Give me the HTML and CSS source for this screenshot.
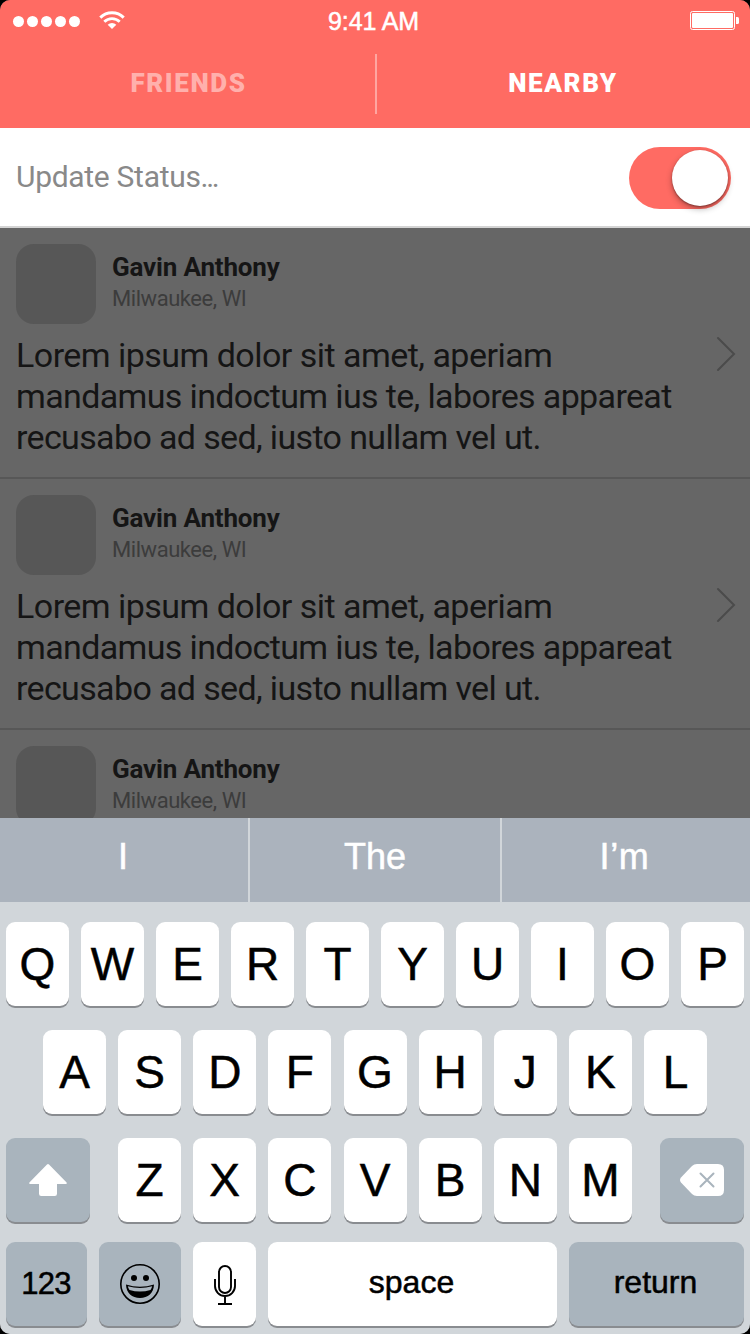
FILE: index.html
```html
<!DOCTYPE html>
<html lang="en">
<head>
<meta charset="utf-8">
<title>Nearby</title>
<link rel="stylesheet" href="styles.css">
</head>
<body>
<div class="screen">
  <header class="header">
    <div class="status-bar">
      <div class="signal">
        <span class="dot"></span><span class="dot"></span><span class="dot"></span><span class="dot"></span><span class="dot"></span>
        <svg class="wifi" width="26" height="18" viewBox="0 0 26 18">
          <path d="M1.3 6.6a16.6 16.6 0 0 1 23.4 0" fill="none" stroke="#fff" stroke-width="3"/>
          <path d="M5.3 10.8a11 11 0 0 1 15.4 0" fill="none" stroke="#fff" stroke-width="2.8"/>
          <path d="M13 18l-4.3-4.2a6.2 6.2 0 0 1 8.6 0z" fill="#fff"/>
        </svg>
      </div>
      <div class="clock">9:41 AM</div>
      <svg class="battery" width="49" height="19" viewBox="0 0 49 19">
        <rect x=".5" y=".5" width="44" height="18" rx="2" fill="none" stroke="#fff"/>
        <rect x="2" y="2" width="41" height="15" rx="1" fill="#fff"/>
        <path d="M46 6h1.500a1.500 1.500 0 0 1 1.500 1.500v4a1.500 1.500 0 0 1-1.500 1.500H46z" fill="#fff"/>
      </svg>
    </div>
    <nav class="tabs">
      <a class="tab friends">FRIENDS</a>
      <span class="tab-divider"></span>
      <a class="tab nearby">NEARBY</a>
    </nav>
  </header>
  <section class="composer">
    <span class="placeholder">Update Status<span class="dots">...</span></span>
    <span class="toggle"><span class="knob"></span></span>
  </section>
  <main class="feed">
    <article class="post">
      <div class="author">
        <div class="avatar"></div>
        <div class="meta"><div class="name">Gavin Anthony</div><div class="place">Milwaukee, WI</div></div>
      </div>
      <div class="content">
        <p class="body">Lorem ipsum dolor sit amet, aperiam<br>mandamus indoctum ius te, labores appareat<br>recusabo ad sed, iusto nullam vel ut.</p>
        <svg class="chevron" width="20" height="36" viewBox="0 0 20 36"><path d="M2 2L18 18 2 34"/></svg>
      </div>
    </article>
    <article class="post">
      <div class="author">
        <div class="avatar"></div>
        <div class="meta"><div class="name">Gavin Anthony</div><div class="place">Milwaukee, WI</div></div>
      </div>
      <div class="content">
        <p class="body">Lorem ipsum dolor sit amet, aperiam<br>mandamus indoctum ius te, labores appareat<br>recusabo ad sed, iusto nullam vel ut.</p>
        <svg class="chevron" width="20" height="36" viewBox="0 0 20 36"><path d="M2 2L18 18 2 34"/></svg>
      </div>
    </article>
    <article class="post">
      <div class="author">
        <div class="avatar"></div>
        <div class="meta"><div class="name">Gavin Anthony</div><div class="place">Milwaukee, WI</div></div>
      </div>
    </article>
  </main>
  <section class="keyboard">
    <div class="suggestions">
      <span class="suggestion">I</span><span class="suggestion middle">The</span><span class="suggestion last">I’m</span>
    </div>
    <div class="keys">
      <div class="row">
        <span class="key">Q</span><span class="key">W</span><span class="key">E</span><span class="key">R</span><span class="key">T</span><span class="key">Y</span><span class="key">U</span><span class="key">I</span><span class="key">O</span><span class="key">P</span>
      </div>
      <div class="row row-home">
        <span class="key">A</span><span class="key">S</span><span class="key">D</span><span class="key">F</span><span class="key">G</span><span class="key">H</span><span class="key">J</span><span class="key">K</span><span class="key">L</span>
      </div>
      <div class="row row-lower">
        <span class="key dark side">
          <svg width="38" height="32" viewBox="0 0 38 32"><path d="M18 .6a1.400 1.400 0 0 1 2 0L37.600 18.500q.9 1.500-1 1.500H28v9.800q0 2.200-2.200 2.200H12.200Q10 32 10 29.800V20H1.400q-1.900 0-1-1.500z" fill="#fff"/></svg>
        </span>
        <div class="letters"><span class="key">Z</span><span class="key">X</span><span class="key">C</span><span class="key">V</span><span class="key">B</span><span class="key">N</span><span class="key">M</span></div>
        <span class="key dark side">
          <svg width="44" height="32" viewBox="0 0 44 32"><path d="M17 0h21q6 0 6 6v20q0 6-6 6H17q-3 0-5-2L1 18.500q-2-2.500 0-5L12 2q2-2 5-2z" fill="#fff"/><path d="M20.500 9.500l13 13m0-13l-13 13" fill="none" stroke="#a9b4bd" stroke-width="2" stroke-linecap="round"/></svg>
        </span>
      </div>
      <div class="row row-bottom">
        <span class="key dark numbers">123</span>
        <span class="key dark emoji">
          <svg width="40" height="40" viewBox="0 0 40 40"><circle cx="20" cy="20" r="19.200" fill="none" stroke="#000" stroke-width="1.600"/><circle cx="14" cy="14" r="3"/><circle cx="26" cy="14" r="3"/><path d="M6 20.500q14 4.500 28 0C33.800 29 28 34 20 34S6.200 29 6 20.500z"/><path d="M7.800 22.300q12.200 3.400 24.400 0-.6 2.300-1.700 3.800-10.500 3-21 0-1.200-1.600-1.700-3.800z" fill="#a9b4bd"/></svg>
        </span>
        <span class="key mic">
          <svg width="22" height="40" viewBox="0 0 22 40" fill="none" stroke="#000" stroke-width="1.900"><rect x="5" y="1" width="12" height="27" rx="6"/><path d="M1 14v7a10 10 0 0 0 20 0v-7M11 31v8M4 39h14"/></svg>
        </span>
        <span class="key space">space</span>
        <span class="key dark return">return</span>
      </div>
    </div>
  </section>
</div>
</body>
</html>
```
FILE: styles.css
```css
* { box-sizing: border-box; }
body { margin: 0; background: #000; }
.screen {
  width: 750px; height: 1334px; overflow: hidden; border-radius: 10px;
  display: flex; flex-direction: column; background: #666;
  font-family: Roboto, "Liberation Sans", sans-serif;
}
.header { flex: none; height: 128px; background: #ff6b63; color: #fff; }
.status-bar {
  height: 40px; padding: 2px 11px 0 13px;
  display: grid; grid-template-columns: 1fr auto 1fr; align-items: center;
  font-family: "Liberation Sans", sans-serif;
}
.signal { display: flex; align-items: center; gap: 3px; }
.dot { width: 11px; height: 11px; border-radius: 50%; background: #fff; }
.wifi { margin: 0 0 2px 16px; }
.clock { font-size: 25px; line-height: 38px; padding-right: 5px; letter-spacing: -.1px; -webkit-text-stroke: .5px #fff; }
.battery { justify-self: end; margin-bottom: 2px; }
.tabs { height: 88px; display: grid; grid-template-columns: 375px 2px 1fr; align-items: center; }
.tab {
  text-align: center; font-size: 26px; line-height: 30px; font-weight: 900;
  letter-spacing: 1.600px; padding-bottom: 2px;
}
.friends { color: #ffb0ac; padding-left: 2px; }
.nearby { padding-right: 1px; }
.tab-divider { width: 2px; height: 60px; background: #ffa6a1; }
.composer {
  flex: none; height: 100px; padding: 0 19px 0 16px; background: #fff;
  border-bottom: 2px solid #d4d4d4;
  display: flex; align-items: center; justify-content: space-between;
}
.placeholder { font-size: 30px; color: #898989; letter-spacing: -.3px; padding-bottom: 2px; }
.dots { letter-spacing: -2.300px; }
.toggle {
  width: 102px; height: 62px; border-radius: 31px; background: #ff6b63; padding: 3px;
  display: flex; justify-content: flex-end; margin-top: 2px;
}
.knob { width: 56px; height: 56px; border-radius: 50%; background: #fff; box-shadow: 0 3px 6px rgba(0,0,0,.3), 0 1px 2px rgba(0,0,0,.35); }
.feed { height: 590px; flex: none; overflow: hidden; }
.post { height: 251px; padding: 16px 14px 0 16px; border-bottom: 2px solid #575757; }
.author { display: flex; gap: 16px; height: 80px; }
.avatar { width: 80px; height: 80px; border-radius: 18px; background: #575757; }
.meta { padding-top: 8px; line-height: 31px; }
.name { font-size: 26px; font-weight: 700; color: #151515; letter-spacing: -.17px; }
.place { font-size: 22px; color: #3c3c3c; letter-spacing: -.45px; }
.content { display: flex; justify-content: space-between; padding-top: 11px; }
.body {
  margin: 0; font-size: 34px; line-height: 41px; color: #151515; white-space: nowrap;
  letter-spacing: -.64px;
}
.body::first-line { letter-spacing: -.53px; }
.chevron { margin-top: 1px; fill: none; stroke: #4b4b4b; stroke-width: 2; stroke-linecap: round; }
.keyboard { flex: 1; background: #d1d6da; font-family: "Liberation Sans", sans-serif; }
.suggestions { height: 84px; display: grid; grid-template-columns: 248px 250px 248px; gap: 2px; }
.suggestion {
  background: #abb3bd; color: #fff; font-size: 36px; line-height: 77px; text-align: center;
  padding-right: 2px; -webkit-text-stroke: .5px #fff;
}
.middle { padding-right: 0; }
.last { letter-spacing: .7px; padding-right: 3px; }
.keys { padding: 20px 6px 0; display: flex; flex-direction: column; gap: 24px; }
.row { display: flex; gap: 12px; }
.row-home { padding: 0 37px; gap: 12.130px; }
.row-lower { gap: 28px; }
.letters { display: flex; gap: 12.180px; width: 514px; }
.row-bottom { margin-top: -4px; }
.key {
  width: 63px; height: 84px; flex: none; border-radius: 9px; background: #fff; color: #000;
  box-shadow: 0 2px 0 #898c90; font-size: 46px; line-height: 84px;
  display: flex; justify-content: center; align-items: center; -webkit-text-stroke: .5px #000;
}
.dark { background: #a9b4bd; }
.side { width: 84px; }
.numbers { width: 81px; font-size: 31px; letter-spacing: -.7px; padding: 0 1px 1px 0; }
.emoji { width: 82px; }
.mic { padding-top: 2px; }
.space { width: 289px; font-size: 32px; padding: 0 2px 5px 0; }
.return { width: 175px; font-size: 32px; padding: 0 2px 5px 0; }
```
